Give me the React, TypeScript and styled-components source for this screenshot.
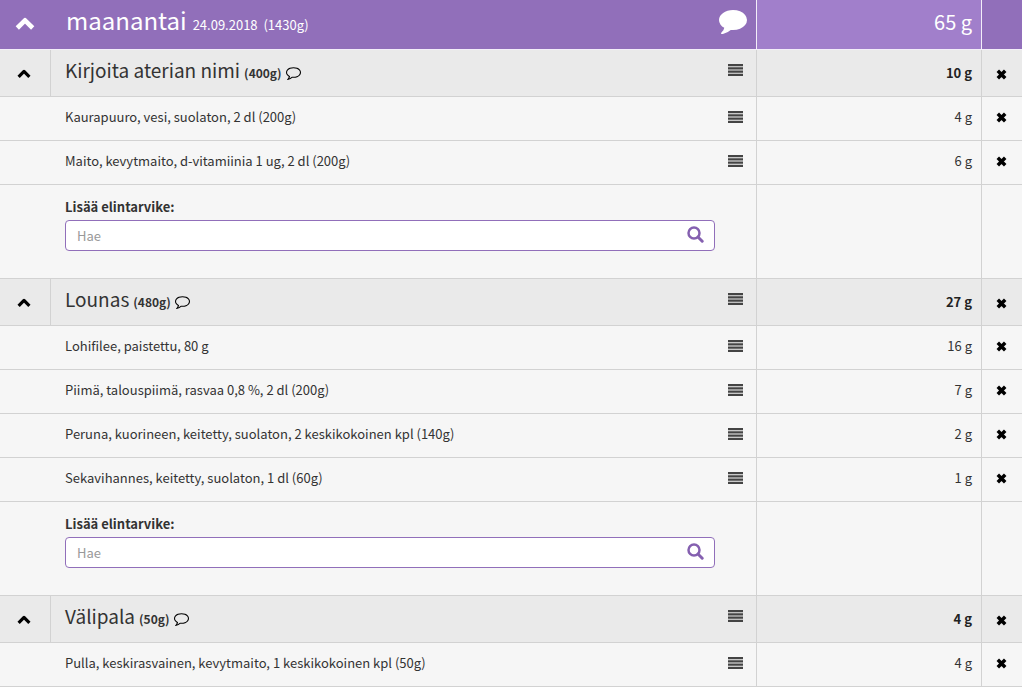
import React, { useState } from 'react';
import styled, { createGlobalStyle } from 'styled-components';

const GlobalStyle = createGlobalStyle`
  * { box-sizing: border-box; }
  body {
    margin: 0;
    background: #fff;
    color: #333;
    font-family: "Noto Sans CJK SC", "Source Sans Pro", sans-serif;
    font-size: 13px;
    line-height: 20px;
  }
  button, input { font: inherit; color: inherit; }
`;

const Page = styled.main`
  padding-right: 2px;
`;

const DiaryTable = styled.table`
  width: 100%;
  table-layout: fixed;
  border-collapse: separate;
  border-spacing: 0;
`;

const ToggleCol = styled.col`width: 51px;`;
const AmountCol = styled.col`width: 225px;`;
const RemoveCol = styled.col`width: 40px;`;

const Cell = styled.td`
  padding: 0;
  border: 0 solid #d2d2d2;
  border-bottom-width: 1px;
  text-align: left;
  font-weight: 400;
`;

const ToggleCell = styled(Cell)<{ $ruled?: boolean }>`
  border-right-width: ${p => (p.$ruled ? '1px' : '0')};
  padding-right: 2px;
  text-align: center;
`;

const NameCell = styled(Cell)`
  border-right-width: 1px;
  padding: 0 13px 0 14px;
`;

const AmountCell = styled(Cell)`
  border-right-width: 1px;
  padding-right: 9px;
  text-align: right;
`;

const RemoveCell = styled(Cell)`
  padding-right: 2px;
  text-align: center;
`;

const DayRow = styled.tr`
  height: 50px;
  background: #916fba;
  color: #fff;
  ${Cell} { border-color: #f3eef9; }
  ${ToggleCell} { padding-bottom: 2px; }
  ${NameCell} { padding: 0 9px 10px 15px; }
  ${AmountCell} { background: #a17fcb; font-size: 20px; padding-bottom: 6px; }
`;

const MealRow = styled.tr`
  height: 47px;
  background: #eaeaea;
  ${AmountCell} { font-weight: 700; color: #222; }
  ${NameCell} { padding-bottom: 6px; }
`;

const ItemRow = styled.tr`
  height: 44px;
  background: #f6f6f6;
  ${Cell} { padding-bottom: 4px; }
`;

const SearchRow = styled.tr`
  height: 94px;
  background: #f6f6f6;
  ${NameCell} { padding: 0 41px 16px 14px; }
`;

const NameLine = styled.div`
  display: flex;
  align-items: center;
  justify-content: space-between;
`;

const Title = styled.div`
  display: flex;
  align-items: baseline;
  gap: 4px;
`;

const DayTitle = styled(Title)`
  gap: 6px;
`;

const DayName = styled.h1`
  margin: 0;
  font-size: 24px;
  line-height: 32px;
  font-weight: 400;
`;

const DayInfo = styled.span`
  white-space: pre;
`;

const MealName = styled.h2`
  margin: 0;
  font-size: 19px;
  line-height: 28px;
  font-weight: 400;
`;

const MealWeight = styled.strong`
  font-size: 12px;
`;

const IconButton = styled.button`
  display: inline-flex;
  align-items: center;
  justify-content: center;
  padding: 0;
  border: 0;
  background: none;
  color: inherit;
  cursor: pointer;
  vertical-align: middle;
`;

const DarkButton = styled(IconButton)`
  color: #000;
`;

const NoteButton = styled(DarkButton)`
  align-self: center;
  padding-top: 4px;
`;

const SearchForm = styled.form`
  display: flex;
  flex-direction: column;
  gap: 3px;
`;

const SearchLabel = styled.label`
  font-weight: 700;
`;

const SearchBox = styled.div`
  display: flex;
  align-items: center;
  height: 31px;
  padding: 0 10px 0 11px;
  border: 1px solid #916fba;
  border-radius: 4px;
  background: #fff;
`;

const SearchInput = styled.input`
  flex: 1;
  min-width: 0;
  padding: 2px 0 0;
  border: 0;
  outline: 0;
  background: none;
  &::placeholder { color: #999; opacity: 1; }
`;

const SearchButton = styled(IconButton)`
  padding-bottom: 2px;
  color: #8560b0;
`;

const ChevronIcon = ({ size, down }: { size: number; down?: boolean }) => (
  <svg width={size} height={size} viewBox="0 0 20 20" fill="none" stroke="currentColor" aria-hidden="true"
    transform={down ? 'rotate(180)' : undefined}>
    <path d="M2.3 14 10 6.3 17.7 14" strokeWidth="4.6" strokeLinejoin="round" />
  </svg>
);

const CommentIcon = () => (
  <svg width="28" height="28" viewBox="0 0 1792 1792" fill="currentColor" aria-hidden="true">
    <path d="M1792 896q0 174-120 321.5t-326 233-450 85.5q-70 0-145-8-198 175-460 242-49 14-114 22-17 2-30.5-9t-17.5-29v-1q-3-4-.5-12t2-10 4.5-9.5l6-9 7-8.5 8-9q7-8 31-34.5t34.5-38 31-39.5 32.5-51 27-59 26-76q-157-89-247.5-220t-90.5-281q0-130 71-248.5t191-204.5 286-136.5 348-50.5q244 0 450 85.5t326 233 120 321.5z" />
  </svg>
);

const CommentOutlineIcon = () => (
  <svg width="15" height="15" viewBox="0 0 1792 1792" fill="currentColor" aria-hidden="true">
    <path d="M896 384q-204 0-381.5 69.5t-282 187.5-104.5 255q0 112 71.5 213.5t201.5 175.5l87 50-27 96q-24 91-70 172 152-63 275-171l43-38 57 6q69 8 130 8 204 0 381.5-69.5t282-187.5 104.5-255-104.5-255-282-187.5-381.5-69.5zm896 512q0 174-120 321.5t-326 233-450 85.5q-70 0-145-8-198 175-460 242-49 14-114 22h-5q-15 0-27-10.5t-16-27.5v-1q-3-4-.5-12t2-10 4.5-9.5l6-9 7-8.5 8-9q7-8 31-34.5t34.5-38 31-39.5 32.5-51 27-59 26-76q-157-89-247.5-220t-90.5-281q0-174 120-321.5t326-233 450-85.5 450 85.5 326 233 120 321.5z" />
  </svg>
);

const LinesIcon = () => (
  <svg width="15" height="12" viewBox="0 0 15 12" fill="#444" aria-hidden="true">
    <path d="M0 0h15v2.2H0zM0 3.2h15v2.3H0zM0 6.5h15v2.3H0zM0 9.8h15v2.2H0z" />
  </svg>
);

const RemoveIcon = () => (
  <svg width="11" height="11" viewBox="0 0 11 11" fill="none" stroke="currentColor" aria-hidden="true">
    <path d="M1.8 1.8 9.2 9.2M9.2 1.8 1.8 9.2" strokeWidth="3.5" />
  </svg>
);

const SearchIcon = () => (
  <svg width="17" height="17" viewBox="0 0 17 17" fill="none" stroke="currentColor" aria-hidden="true">
    <circle cx="7" cy="7" r="5.5" strokeWidth="2.5" />
    <path d="M11.2 11.2 15.2 15.2" strokeWidth="3" strokeLinecap="round" />
  </svg>
);

type Item = { name: string; amount: string };
type Meal = { id: string; name: string; weight: string; amount: string; items: Item[]; search: boolean };

const meals: Meal[] = [
  {
    id: 'meal-1', name: 'Kirjoita aterian nimi', weight: '(400g)', amount: '10 g', search: true,
    items: [
      { name: 'Kaurapuuro, vesi, suolaton, 2 dl (200g)', amount: '4 g' },
      { name: 'Maito, kevytmaito, d-vitamiinia 1 ug, 2 dl (200g)', amount: '6 g' },
    ],
  },
  {
    id: 'meal-2', name: 'Lounas', weight: '(480g)', amount: '27 g', search: true,
    items: [
      { name: 'Lohifilee, paistettu, 80 g', amount: '16 g' },
      { name: 'Piimä, talouspiimä, rasvaa 0,8 %, 2 dl (200g)', amount: '7 g' },
      { name: 'Peruna, kuorineen, keitetty, suolaton, 2 keskikokoinen kpl (140g)', amount: '2 g' },
      { name: 'Sekavihannes, keitetty, suolaton, 1 dl (60g)', amount: '1 g' },
    ],
  },
  {
    id: 'meal-3', name: 'Välipala', weight: '(50g)', amount: '4 g', search: false,
    items: [{ name: 'Pulla, keskirasvainen, kevytmaito, 1 keskikokoinen kpl (50g)', amount: '4 g' }],
  },
];

const MoveHandle = () => (
  <IconButton type="button" aria-label="Siirrä"><LinesIcon /></IconButton>
);

const RemoveButton = () => (
  <DarkButton type="button" aria-label="Poista"><RemoveIcon /></DarkButton>
);

function MealSection({ meal }: { meal: Meal }) {
  const [open, setOpen] = useState(true);
  return (
    <tbody>
      <MealRow>
        <ToggleCell $ruled>
          <DarkButton type="button" aria-label="Näytä ateria" aria-expanded={open} onClick={() => setOpen(!open)}>
            <ChevronIcon size={14} down={!open} />
          </DarkButton>
        </ToggleCell>
        <NameCell>
          <NameLine>
            <Title>
              <MealName>{meal.name}</MealName>
              <MealWeight>{meal.weight}</MealWeight>
              <NoteButton type="button" aria-label="Kommentti"><CommentOutlineIcon /></NoteButton>
            </Title>
            <MoveHandle />
          </NameLine>
        </NameCell>
        <AmountCell>{meal.amount}</AmountCell>
        <RemoveCell><RemoveButton /></RemoveCell>
      </MealRow>
      {open && meal.items.map(item => (
        <ItemRow key={item.name}>
          <ToggleCell />
          <NameCell>
            <NameLine><span>{item.name}</span><MoveHandle /></NameLine>
          </NameCell>
          <AmountCell>{item.amount}</AmountCell>
          <RemoveCell><RemoveButton /></RemoveCell>
        </ItemRow>
      ))}
      {open && meal.search && (
        <SearchRow>
          <ToggleCell />
          <NameCell>
            <SearchForm onSubmit={e => e.preventDefault()}>
              <SearchLabel htmlFor={meal.id}>Lisää elintarvike:</SearchLabel>
              <SearchBox>
                <SearchInput id={meal.id} type="text" placeholder="Hae" />
                <SearchButton type="submit" aria-label="Hae"><SearchIcon /></SearchButton>
              </SearchBox>
            </SearchForm>
          </NameCell>
          <AmountCell />
          <RemoveCell />
        </SearchRow>
      )}
    </tbody>
  );
}

export default function App() {
  const [open, setOpen] = useState(true);
  return (
    <Page>
      <GlobalStyle />
      <DiaryTable>
        <colgroup>
          <ToggleCol />
          <col />
          <AmountCol />
          <RemoveCol />
        </colgroup>
        <thead>
          <DayRow>
            <ToggleCell>
              <IconButton type="button" aria-label="Näytä päivä" aria-expanded={open} onClick={() => setOpen(!open)}>
                <ChevronIcon size={20} down={!open} />
              </IconButton>
            </ToggleCell>
            <NameCell>
              <NameLine>
                <DayTitle>
                  <DayName>maanantai</DayName>
                  <DayInfo>24.09.2018  (1430g)</DayInfo>
                </DayTitle>
                <IconButton type="button" aria-label="Kommentti"><CommentIcon /></IconButton>
              </NameLine>
            </NameCell>
            <AmountCell>65 g</AmountCell>
            <RemoveCell />
          </DayRow>
        </thead>
        {open && meals.map(meal => <MealSection key={meal.id} meal={meal} />)}
      </DiaryTable>
    </Page>
  );
}
